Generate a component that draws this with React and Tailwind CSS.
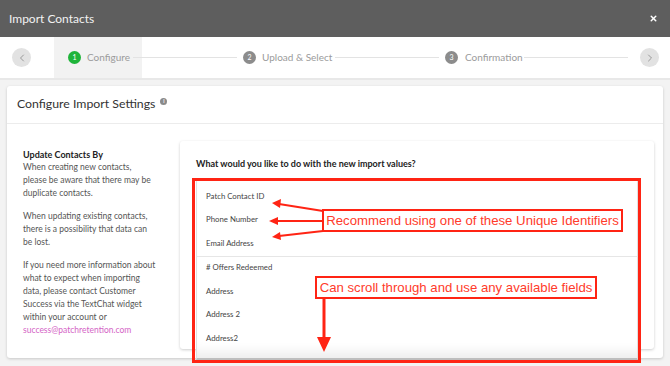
import React from 'react';
import { ChevronLeft, ChevronRight, X } from 'lucide-react';

const font = { fontFamily: 'Lato, "Open Sans", sans-serif' };
const arial = { fontFamily: '"Liberation Sans", Arial, sans-serif' };

const StepDot = ({ n, active }) => (
  <div
    className={`w-[13px] h-[13px] rounded-full flex items-center justify-center text-[7px] text-white shrink-0 ${
      active ? 'bg-[#1fb43a]' : 'bg-[#8c8c8c]'
    }`}
  >
    {n}
  </div>
);

const Line = ({ w }) => <div className={`h-px bg-[#e3e3e3] shrink-0 ${w}`} />;

const fields1 = ['Patch Contact ID', 'Phone Number', 'Email Address'];
const fields2 = ['# Offers Redeemed', 'Address', 'Address 2', 'Address2'];

const Lines = ({ lines, className = '' }) => (
  <p className={className}>
    {lines.map((l, i) => (
      <span key={i} className="block whitespace-nowrap">{l}</span>
    ))}
  </p>
);

export default function App() {
  return (
    <div className="relative w-[670px] h-[366px] overflow-hidden bg-[#f3f3f3]" style={font}>
      {/* Title bar */}
      <div className="h-[37px] bg-[#5e5e5e] flex items-center justify-between pl-[9px] pr-[12px]">
        <span className="text-[12px] text-[#f2f2f2]">Import Contacts</span>
        <X size={9} strokeWidth={4} className="text-white" />
      </div>

      {/* Stepper */}
      <div className="h-[43px] bg-white border-b-2 border-[#e8e8e8] flex items-center whitespace-nowrap text-[10px] text-[#9b9b9b]">
        <div className="ml-[12px] w-[19px] h-[19px] rounded-full bg-[#e2e2e2] flex items-center justify-center shrink-0">
          <ChevronLeft size={12} className="text-[#9a9a9a]" />
        </div>
        <div className="ml-[23px] w-[88px] self-stretch bg-[#f2f2f2] flex items-center pl-[14px] shrink-0">
          <StepDot n="1" active />
          <span className="ml-[6px] w-[41px]">Configure</span>
          <div className="ml-[5px] flex-1 h-px bg-[#e3e3e3]" />
        </div>
        <Line w="w-[95px]" />
        <div className="ml-[6px]"><StepDot n="2" /></div>
        <span className="ml-[6px] w-[69px] shrink-0">Upload &amp; Select</span>
        <div className="ml-[4px]"><Line w="w-[104px]" /></div>
        <div className="ml-[6px]"><StepDot n="3" /></div>
        <span className="ml-[7px] w-[54px] shrink-0">Confirmation</span>
        <div className="ml-[5px]"><Line w="w-[104px]" /></div>
        <div className="ml-auto mr-[11px] w-[19px] h-[19px] rounded-full bg-[#e2e2e2] flex items-center justify-center shrink-0">
          <ChevronRight size={12} className="text-[#9a9a9a]" />
        </div>
      </div>

      {/* Main card */}
      <div className="mx-[7px] mt-[6px] h-[272px] bg-white rounded-[3px] shadow-[0_1px_3px_rgba(0,0,0,0.18)]">
        <div className="h-[38px] border-b border-[#ececec] flex items-center pl-[10px]">
          <span className="text-[12.3px] text-[#333]">Configure Import Settings</span>
          <span className="ml-[5px] -mt-[6px] w-[7px] h-[7px] rounded-full bg-[#8a8a8a] flex items-center justify-center text-[5px] text-white font-bold">i</span>
        </div>
        <div className="flex pt-[17px]">
          <div className="w-[173px] pl-[16px] pt-[7px] text-[8.5px] leading-[13px] text-[#555]">
            <div className="font-bold text-[9px] text-[#222]">Update Contacts By</div>
            <Lines lines={['When creating new contacts,', 'please be aware that there may be', 'duplicate contacts.']} />
            <Lines
              className="mt-[10px]"
              lines={['When updating existing contacts,', 'there is a possibility that data can', 'be lost.']}
            />
            <p className="mt-[10px]">
              <span className="block whitespace-nowrap">If you need more information about</span>
              <span className="block whitespace-nowrap">what to expect when importing</span>
              <span className="block whitespace-nowrap">data, please contact Customer</span>
              <span className="block whitespace-nowrap">Success via the TextChat widget</span>
              <span className="block whitespace-nowrap">within your account or</span>
              <span className="block whitespace-nowrap text-[#d464c6]">success@patchretention.com</span>
            </p>
          </div>
          <div className="w-[474px] h-[208px] bg-white rounded-[3px] shadow-[0_1px_3px_rgba(0,0,0,0.2)] pt-[16px] px-[16px]">
            <div className="text-[9px] leading-[14px] font-bold text-[#222]">
              What would you like to do with the new import values?
            </div>
            <div className="mt-[9px] h-[180px] overflow-hidden bg-white border border-[#e0e0e0] border-b-2 border-b-[#bdbdbd] shadow-[inset_0_-14px_12px_-8px_rgba(0,0,0,0.08)]">
              <div className="pt-[4px] border-b border-[#e6e6e6]">
                {fields1.map((f) => (
                  <div key={f} className="h-[23.5px] flex items-center pl-[9px] text-[7.8px] text-[#444]">{f}</div>
                ))}
              </div>
              {fields2.map((f) => (
                <div key={f} className="h-[23.5px] flex items-center pl-[9px] text-[7.8px] text-[#444]">{f}</div>
              ))}
            </div>
          </div>
        </div>
      </div>

      {/* Annotation overlay */}
      <div className="absolute left-[192px] top-[178px] w-[449px] h-[185px] border-[3px] border-[#ff2414]" />
      <svg className="absolute inset-0" width="670" height="366" viewBox="0 0 670 366">
        <g stroke="#ff2414" strokeWidth="2">
          <line x1="323" y1="211" x2="279" y2="204" />
          <line x1="323" y1="221" x2="277" y2="221" />
          <line x1="323" y1="231" x2="279" y2="236" />
          <line x1="324" y1="298" x2="324" y2="338" strokeWidth="3" />
        </g>
        <g fill="#ff2414">
          <polygon points="272,203 281,199 280,208" />
          <polygon points="269,221 278,217 278,225" />
          <polygon points="272,237 280,232 281,240" />
          <polygon points="317,337 331,337 324,352" />
        </g>
      </svg>
      <div
        className="absolute left-[322px] top-[209px] w-[301px] h-[23px] border-[2.5px] border-[#ff2414] bg-white flex items-center justify-center whitespace-nowrap text-[13.2px] text-[#ff3b2b]"
        style={arial}
      >
        Recommend using one of these Unique Identifiers
      </div>
      <div
        className="absolute left-[315px] top-[276px] w-[282px] h-[23px] border-[2.5px] border-[#ff2414] bg-white flex items-center justify-center whitespace-nowrap text-[13.2px] text-[#ff3b2b]"
        style={arial}
      >
        Can scroll through and use any available fields
      </div>
    </div>
  );
}
